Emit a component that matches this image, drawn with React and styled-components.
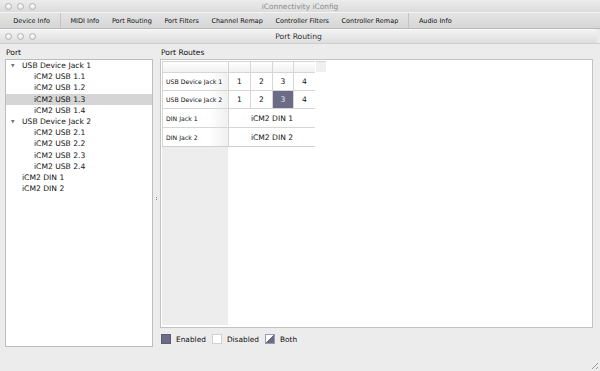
import styled, { createGlobalStyle } from 'styled-components'

const Global = createGlobalStyle`
html, body {
    margin: 0;
    padding: 0;
    background: #ececec;
}
* {
    box-sizing: border-box;
}
`

const Screen = styled.div`
width: 600px;
height: 371px;
overflow: hidden;
display: flex;
flex-direction: column;
position: relative;
background: #ececec;
font-family: "DejaVu Sans", "Liberation Sans", sans-serif;
color: #111;
`

const TitleBar = styled.div`
height: ${p => p.$h}px;
flex: none;
display: flex;
align-items: center;
position: relative;
background: ${p => p.$inner
        ? 'linear-gradient(#f3f3f3, #dedede)'
        : 'linear-gradient(#ececec, #dcdcdc)'};
border-top: ${p => p.$inner ? '1px solid #f8f8f8' : 'none'};
border-top-right-radius: ${p => p.$inner ? '4px' : '0'};
margin-right: ${p => p.$inner ? '3px' : '0'};
`

const Lights = styled.div`
display: flex;
gap: 5px;
padding-left: 5px;
`

const Light = styled.span`
width: 7px;
height: 7px;
border-radius: 50%;
border: 1px solid #b4b4b4;
background: radial-gradient(circle at 50% 35%, #ffffff, #dadada);
`

const Caption = styled.div`
position: absolute;
left: 0;
right: 0;
text-align: center;
font-size: ${p => p.$size}px;
color: ${p => p.$dim ? '#8a8a8a' : '#333'};
pointer-events: none;
`

const Toolbar = styled.div`
height: 17px;
flex: none;
display: flex;
align-items: center;
padding-left: 7px;
background: linear-gradient(#e4e4e4, #d6d6d6);
border-top: 1px solid #f4f4f4;
border-bottom: 1px solid #b9b9b9;
`

const Tab = styled.div`
font-size: 6.5px;
padding: 0 6.3px;
color: #111;
white-space: nowrap;
`

const Sep = styled.div`
width: 1px;
height: 15px;
background: #c4c4c4;
margin: 0 3.5px;
`

const Window = styled.div`
flex: 1;
display: flex;
flex-direction: column;
`

const Body = styled.div`
flex: 1;
display: flex;
padding: 3px 7px 0 5px;
border-top: 1px solid #cfcfcf;
`

const Column = styled.div`
display: flex;
flex-direction: column;
width: ${p => p.$w}px;
flex: none;
`

const Label = styled.div`
font-size: 7.6px;
height: 12px;
line-height: 12px;
padding-left: 1px;
`

const ListBox = styled.div`
height: 288px;
background: #fff;
border: 1px solid #bcbcbc;
`

const Row = styled.div`
height: 11.2px;
display: flex;
align-items: center;
font-size: 7.6px;
padding-left: ${p => p.$indent}px;
background: ${p => p.$selected ? '#d5d5d5' : 'transparent'};
white-space: nowrap;
`

const Twisty = styled.span`
width: 11px;
flex: none;
font-size: 4.6px;
color: #707070;
`

const Splitter = styled.div`
width: 7px;
flex: none;
display: flex;
align-items: flex-start;
justify-content: center;
padding-top: 150px;
`

const Grip = styled.div`
width: 2px;
height: 3px;
border-left: 1px dotted #888;
`

const RoutesBox = styled.div`
height: 269px;
background: #fff;
border: 1px solid #c3c3c3;
padding: 1px;
position: relative;
`

const Grid = styled.div`
display: grid;
grid-template-columns: 66px 22px 22px 21px 22px;
grid-template-rows: 11px 18px 18px 19px 19px;
width: 153px;
border-right: 1px solid #cfcfcf;
border-bottom: 1px solid #cfcfcf;
`

const Cell = styled.div`
display: flex;
align-items: center;
justify-content: ${p => p.$left ? 'flex-start' : 'center'};
padding-left: ${p => p.$left ? '3px' : '0'};
font-size: ${p => p.$small ? 6.2 : 7.6}px;
grid-column: ${p => p.$span || 'auto'};
border-top: 1px solid #d6d6d6;
border-left: 1px solid #d6d6d6;
background: ${p => p.$on ? '#6c6b86' : p.$head ? 'linear-gradient(#ffffff, #f1f1f1)' : p.$label ? 'linear-gradient(90deg, #ffffff 70%, #f0f0f0)' : '#fff'};
color: ${p => p.$on ? '#e6e6ee' : '#111'};
`

const LabelStrip = styled.div`
width: 66px;
height: 178px;
background: #ededed;
`

const HeadTail = styled.div`
position: absolute;
left: 155px;
top: 1px;
width: 10px;
height: 11px;
background: #f0f0f0;
border-top: 1px solid #d6d6d6;
`

const Legend = styled.div`
display: flex;
align-items: center;
height: 22px;
padding-left: 1px;
font-size: 7.4px;
`

const Swatch = styled.span`
width: 10px;
height: 10px;
flex: none;
margin-right: 5px;
border: 1px solid ${p => p.$kind === 'off' ? '#d0d0d0' : p.$kind === 'both' ? '#9a9aae' : '#5d5c76'};
background: ${p => p.$kind === 'on'
        ? '#6c6b86'
        : p.$kind === 'both'
            ? 'linear-gradient(135deg, #ffffff 50%, #6c6b86 50%)'
            : '#fff'};
`

const LegendText = styled.span`
margin-right: 6px;
`

const Resize = styled.div`
position: absolute;
right: 2px;
bottom: 2px;
width: 9px;
height: 9px;
background: repeating-linear-gradient(135deg, transparent 0 2px, #9a9a9a 2px 3px);
clip-path: polygon(100% 0, 100% 100%, 0 100%);
`

const tabs = ['MIDI Info', 'Port Routing', 'Port Filters', 'Channel Remap',
    'Controller Filters', 'Controller Remap']

// indent is measured from the list box's inner left edge
const ports = [
    { name: 'USB Device Jack 1', indent: 5, arrow: true },
    { name: 'iCM2 USB 1.1', indent: 28 },
    { name: 'iCM2 USB 1.2', indent: 28 },
    { name: 'iCM2 USB 1.3', indent: 28, selected: true },
    { name: 'iCM2 USB 1.4', indent: 28 },
    { name: 'USB Device Jack 2', indent: 5, arrow: true },
    { name: 'iCM2 USB 2.1', indent: 28 },
    { name: 'iCM2 USB 2.2', indent: 28 },
    { name: 'iCM2 USB 2.3', indent: 28 },
    { name: 'iCM2 USB 2.4', indent: 28 },
    { name: 'iCM2 DIN 1', indent: 16 },
    { name: 'iCM2 DIN 2', indent: 16 },
]

function App() {
    return (
        <Screen>
            <Global />
            <TitleBar $h={12}>
                <Lights><Light /><Light /><Light /></Lights>
                <Caption $dim $size={7.4}>iConnectivity iConfig</Caption>
            </TitleBar>
            <Toolbar>
                <Tab>Device Info</Tab>
                <Sep />
                {tabs.map(t => <Tab key={t}>{t}</Tab>)}
                <Sep />
                <Tab>Audio Info</Tab>
            </Toolbar>
            <Window>
                <TitleBar $inner $h={14}>
                    <Lights><Light /><Light /><Light /></Lights>
                    <Caption $size={7.6}>Port Routing</Caption>
                </TitleBar>
                <Body>
                    <Column $w={148}>
                        <Label>Port</Label>
                        <ListBox>
                            {ports.map(p => (
                                <Row key={p.name} $indent={p.indent} $selected={p.selected}>
                                    {p.arrow && <Twisty>▼</Twisty>}
                                    {p.name}
                                </Row>
                            ))}
                        </ListBox>
                    </Column>
                    <Splitter><Grip /></Splitter>
                    <Column $w={433}>
                        <Label>Port Routes</Label>
                        <RoutesBox>
                            <Grid>
                                <Cell $head />
                                <Cell $head />
                                <Cell $head />
                                <Cell $head />
                                <Cell $head />
                                <Cell $left $small $label>USB Device Jack 1</Cell>
                                <Cell>1</Cell>
                                <Cell>2</Cell>
                                <Cell>3</Cell>
                                <Cell>4</Cell>
                                <Cell $left $small $label>USB Device Jack 2</Cell>
                                <Cell>1</Cell>
                                <Cell>2</Cell>
                                <Cell $on>3</Cell>
                                <Cell>4</Cell>
                                <Cell $left $small $label>DIN Jack 1</Cell>
                                <Cell $span="span 4">iCM2 DIN 1</Cell>
                                <Cell $left $small $label>DIN Jack 2</Cell>
                                <Cell $span="span 4">iCM2 DIN 2</Cell>
                            </Grid>
                            <HeadTail />
                            <LabelStrip />
                        </RoutesBox>
                        <Legend>
                            <Swatch $kind="on" />
                            <LegendText>Enabled</LegendText>
                            <Swatch $kind="off" />
                            <LegendText>Disabled</LegendText>
                            <Swatch $kind="both" />
                            <LegendText>Both</LegendText>
                        </Legend>
                    </Column>
                </Body>
            </Window>
            <Resize />
        </Screen>
    )
}

export default App
